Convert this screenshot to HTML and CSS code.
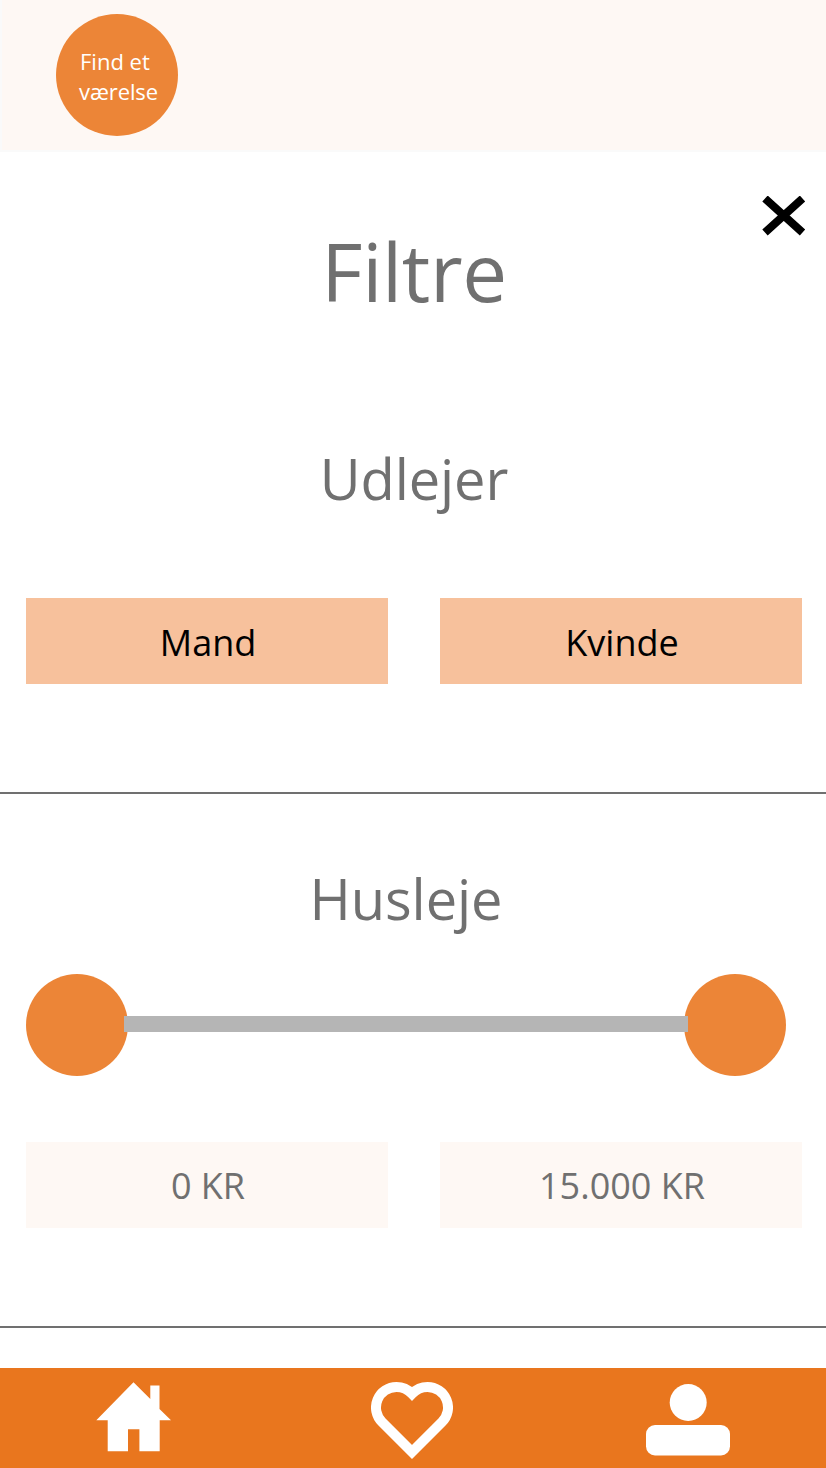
FILE: index.html
```html
<!DOCTYPE html>
<html lang="da">
<head>
<meta charset="utf-8">
<title>Filtre</title>
<link rel="stylesheet" href="styles.css">
</head>
<body>
<header class="top"><a class="logo"><span>Find et</span><span class="second">værelse</span></a></header>
<main>
<section class="intro">
<svg class="close" width="44" height="40" viewBox="0 0 44 40"><path d="M3 2.500 40.500 36.500M40.500 2.500 3 36.500"/></svg>
<h1>Filtre</h1>
</section>
<section class="landlord">
<h2>Udlejer</h2>
<div class="pair"><button class="choice">Mand</button><button class="choice">Kvinde</button></div>
</section>
<section class="rent">
<h2 class="rent-title">Husleje</h2>
<div class="slider"><span class="knob"></span><span class="track"></span><span class="knob"></span></div>
<div class="pair"><div class="amount">0 KR</div><div class="amount">15.000 KR</div></div>
</section>
</main>
<nav class="tabs">
<svg class="home" width="82" height="70" viewBox="0 0 82 70"><path d="M37.500 0.300 54.300 17V3.400H63.500V27L75 38.200H63.700V69.300H43.400V47.200H32V69.300H11.700V38.200H0.300Z"/></svg>
<svg class="heart" width="82" height="78" viewBox="0 0 82 78"><path d="M41 70 11 40A20.500 20.500 0 0 1 25.500 5Q34.500 5 41 11.800Q47.500 5 56.500 5A20.500 20.500 0 0 1 71 40Z"/></svg>
<svg class="person" width="84" height="72" viewBox="0 0 84 72"><circle cx="42.200" cy="18.500" r="18.500"/><rect y="41" width="84" height="30.400" rx="9"/></svg>
</nav>
</body>
</html>
```
FILE: styles.css
```css
* { box-sizing: border-box; }
body { margin: 0; width: 826px; height: 1468px; overflow: hidden; background: #fff; font-family: "Open Sans", "Noto Sans", sans-serif; color: #707070; display: flex; flex-direction: column; }
.top { height: 152px; padding: 14px 54px; background: #fef8f4; border: 2px solid #fafafa; border-right: 0; border-top: 0; }
.logo { display: flex; flex-direction: column; justify-content: center; width: 122px; height: 122px; padding: 1px 0 0 24px; border-radius: 50%; background: #ec8537; color: #fff; font-size: 22px; line-height: 30px; }
.second { margin-left: -1px; letter-spacing: -0.1px; }
main { flex: 1; }
h1, h2 { margin: 0; font-weight: 400; text-align: center; }
.intro { height: 228px; position: relative; padding-top: 64px; }
.close { position: absolute; left: 762px; top: 44px; fill: none; stroke: #000; stroke-width: 8; }
h1 { font-size: 80px; line-height: 110px; letter-spacing: -0.4px; padding-left: 2px; }
h2 { font-size: 56px; line-height: 76px; letter-spacing: -0.1px; }
.landlord { height: 414px; padding-top: 60px; border-bottom: 2px solid #707070; }
.landlord h2 { padding-left: 2px; }
.pair { display: grid; grid-template-columns: 362px 362px; gap: 52px; padding-left: 26px; }
.landlord .pair { padding-top: 82px; }
.choice, .amount { height: 86px; border: 0; display: flex; align-items: center; justify-content: center; font: 36px/50px "Open Sans", "Noto Sans", sans-serif; padding: 1px 0 0 2px; }
.choice { background: #f7c19c; color: #000; padding-top: 4px; }
.amount { background: #fef8f4; }
.rent { height: 534px; padding-top: 66px; border-bottom: 2px solid #707070; }
.rent-title { padding-right: 14px; }
.slider { display: flex; align-items: center; height: 102px; margin: 38px 40px 66px 26px; }
.knob { width: 102px; height: 102px; border-radius: 50%; background: #ec8537; }
.track { flex: 1; height: 16px; margin: -2px -4px 0; background: #b5b5b5; z-index: 1; }
.tabs { height: 100px; background: #e9761e; display: flex; justify-content: space-between; align-items: flex-start; padding: 14px 96px; fill: #fff; }
.heart { fill: none; stroke: #fff; stroke-width: 10; }
.person { margin-top: 2px; }
```
